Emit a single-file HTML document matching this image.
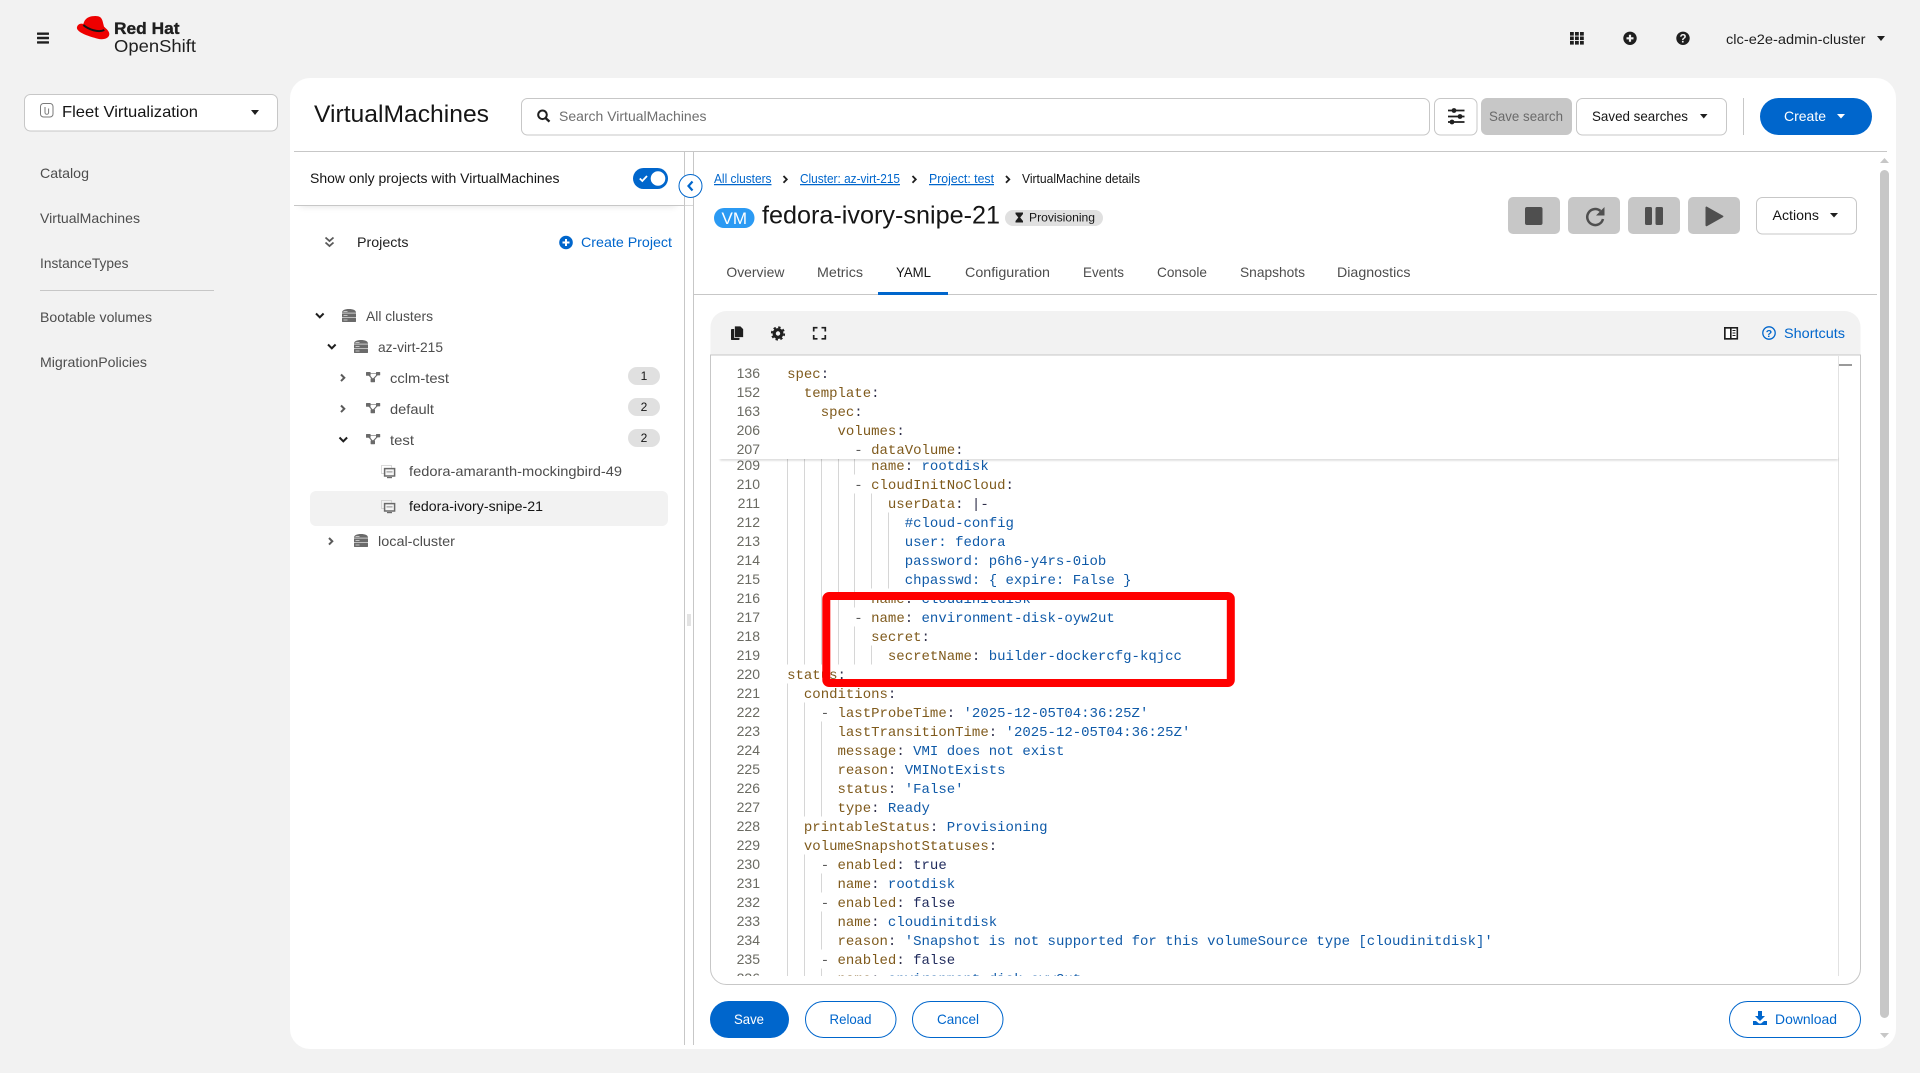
<!DOCTYPE html>
<html lang="en"><head><meta charset="utf-8"><title>VirtualMachines</title>
<style>
html,body{margin:0;padding:0;background:#f2f2f2;overflow:hidden}
svg{display:block}
text{font-family:"Liberation Sans",sans-serif;font-size:14px;white-space:pre}
.n{fill:#4d4d4d}.d{fill:#1f1f1f}.b{fill:#0066cc}.w{fill:#fff}
.m text,text.m{font-family:"Liberation Mono",monospace;font-size:14px}
.k{fill:#7f5a1c}.v{fill:#0f5aa8}.c{fill:#2f2f4a}.f{fill:#1f2a5c}.g{fill:#5a5a5a}
.ln text{fill:#6a6a62;text-anchor:end}
.gd line{stroke:#d6d6d6;stroke-width:1}
</style></head><body>
<svg width="1920" height="1073" viewBox="0 0 1920 1073" xmlns="http://www.w3.org/2000/svg">
<defs>
<filter id="sh" x="-5%" y="-100%" width="110%" height="400%"><feGaussianBlur stdDeviation="4"/></filter>
<clipPath id="cc"><rect x="712" y="459" width="1126" height="517"/></clipPath>
<g id="srv" fill="#6a6a6a"><path d="M0 3.800C0 1 3 0 7 0s7 1 7 3.800z"/><rect x="0" y="4.400" width="14" height="3.900"/><rect x="0" y="8.900" width="14" height="4.100" rx=".6"/><g fill="#d8d8d8"><rect x="1.500" y="2.200" width="4" height=".8"/><rect x="1.500" y="6" width="4" height=".8"/><rect x="1.500" y="10.600" width="4" height=".8"/></g></g>
<g id="prj" fill="#6a6a6a"><rect x="0" y="0" width="4.600" height="3.800" rx=".6"/><rect x="10" y="0" width="4.200" height="3.400" rx=".6"/><rect x="4.600" y="6.400" width="4.400" height="3.800" rx=".6"/><path d="M2.500 2.500L6.800 7.500M6.800 7.500L12 2" stroke="#6a6a6a" stroke-width="1.100" fill="none"/><path d="M4 1.600H10.500" stroke="#6a6a6a" stroke-width=".6"/></g>
<g id="vm"><rect x=".5" y=".5" width="10" height="8" fill="none" stroke="#b5b5b5" stroke-width="1" stroke-dasharray="1 1"/><rect x="3.600" y="3.600" width="10" height="7.400" fill="#f5f5f5" stroke="#6a6a6a" stroke-width="1.500"/><rect x="5.500" y="6.400" width="6" height="1" fill="#8a8a8a"/><path d="M6 12h5v1.200H6z" fill="#6a6a6a"/></g>
</defs>

<rect width="1920" height="1073" fill="#f2f2f2"/>

<!-- masthead -->
<g fill="#1f1f1f"><rect x="37" y="32.500" width="12" height="2.400" rx=".5"/><rect x="37" y="36.800" width="12" height="2.400" rx=".5"/><rect x="37" y="41.200" width="12" height="2.400" rx=".5"/></g>
<g transform="translate(20,8) scale(.33333)">
<path fill="#e00" d="M192 42C198 28 212 24 226 24C238 24 245 28 248 40L252 56C258 62 268 69 268 78C268 91 250 97 232 92C210 86 176 76 171 62C169 52 180 44 190 48Z"/>
<path fill="none" stroke="#151515" stroke-width="6" d="M190 51C205 64 235 75 253 66"/>
</g>
<text x="114" y="34" style="font-size:17px;font-weight:700;stroke:#1f1f1f;stroke-width:.35" fill="#1f1f1f" textLength="65.500" lengthAdjust="spacingAndGlyphs">Red Hat</text>
<text x="114" y="52" style="font-size:17.500px" fill="#1f1f1f" textLength="82" lengthAdjust="spacingAndGlyphs">OpenShift</text>

<g fill="#1f1f1f">
<rect x="1570" y="32" width="3.800" height="3.600"/><rect x="1575" y="32" width="3.800" height="3.600"/><rect x="1580" y="32" width="3.800" height="3.600"/>
<rect x="1570" y="36.500" width="3.800" height="3.600"/><rect x="1575" y="36.500" width="3.800" height="3.600"/><rect x="1580" y="36.500" width="3.800" height="3.600"/>
<rect x="1570" y="41" width="3.800" height="3.600"/><rect x="1575" y="41" width="3.800" height="3.600"/><rect x="1580" y="41" width="3.800" height="3.600"/>
<circle cx="1630" cy="38.300" r="6.700"/><circle cx="1683" cy="38.300" r="6.700"/>
</g>
<path d="M1626.500 38.300h7M1630 34.800v7" stroke="#f2f2f2" stroke-width="2.200"/>
<text x="1683" y="42.500" text-anchor="middle" style="font-size:11.500px;font-weight:700" fill="#f2f2f2">?</text>
<text x="1726" y="44" class="d" textLength="139.500" lengthAdjust="spacingAndGlyphs">clc-e2e-admin-cluster</text>
<path d="M1877 36h8l-4 5z" fill="#1f1f1f"/>

<!-- left nav -->
<rect x="24.500" y="94.500" width="253" height="36.500" rx="6" fill="#fff" stroke="#c7c7c7"/>
<rect x="40.500" y="103.500" width="12.500" height="13.500" rx="3" fill="none" stroke="#7a7a7a"/>
<path d="M45 107v5.500a1.800 1.800 0 0 0 3.600 0V108.500" fill="none" stroke="#7a7a7a" stroke-width="1"/>
<text x="62" y="117" style="font-size:16px" fill="#151515" textLength="136" lengthAdjust="spacingAndGlyphs">Fleet Virtualization</text>
<path d="M251 110h8l-4 5z" fill="#1f1f1f"/>
<text x="40" y="178" class="n" textLength="49" lengthAdjust="spacingAndGlyphs">Catalog</text>
<text x="40" y="223" class="n" textLength="100" lengthAdjust="spacingAndGlyphs">VirtualMachines</text>
<text x="40" y="268" class="n" textLength="88.500" lengthAdjust="spacingAndGlyphs">InstanceTypes</text>
<rect x="40" y="290" width="174" height="1" fill="#c7c7c7"/>
<text x="40" y="322" class="n" textLength="112" lengthAdjust="spacingAndGlyphs">Bootable volumes</text>
<text x="40" y="367" class="n" textLength="107" lengthAdjust="spacingAndGlyphs">MigrationPolicies</text>

<!-- main card -->
<rect x="290" y="78" width="1606" height="971" rx="20" fill="#fff"/>
<text x="314" y="122" style="font-size:24px" fill="#151515" textLength="175" lengthAdjust="spacingAndGlyphs">VirtualMachines</text>

<rect x="521.500" y="98.500" width="908" height="36.500" rx="6" fill="#fff" stroke="#c7c7c7"/>
<circle cx="542.500" cy="114.800" r="4.300" fill="none" stroke="#1f1f1f" stroke-width="2"/><path d="M545.500 118l4 3.600" stroke="#1f1f1f" stroke-width="2.400"/>
<text x="559" y="121" fill="#6f6f6f" textLength="147.500" lengthAdjust="spacingAndGlyphs">Search VirtualMachines</text>

<rect x="1434.500" y="98.500" width="42.500" height="36.500" rx="6" fill="#fff" stroke="#c7c7c7"/>
<path d="M1448 110.500h16.500M1448 116.500h16.500M1448 122h16.500" stroke="#1f1f1f" stroke-width="1.800"/><circle cx="1454" cy="110.500" r="2.400" fill="#1f1f1f"/><circle cx="1460" cy="116.500" r="2.400" fill="#1f1f1f"/><circle cx="1452" cy="122" r="2.400" fill="#1f1f1f"/>
<rect x="1481" y="98" width="91" height="37" rx="6" fill="#c7c7c7"/>
<text x="1489" y="121" fill="#6a6a6a" textLength="74" lengthAdjust="spacingAndGlyphs">Save search</text>
<rect x="1576.500" y="98.500" width="150" height="36.500" rx="6" fill="#fff" stroke="#c7c7c7"/>
<text x="1592" y="121" fill="#151515" textLength="96" lengthAdjust="spacingAndGlyphs">Saved searches</text>
<path d="M1700 114h7.500l-3.750 4.500z" fill="#1f1f1f"/>
<rect x="1743" y="98" width="1" height="37" fill="#c7c7c7"/>
<rect x="1760" y="98" width="112" height="37" rx="18.500" fill="#0066cc"/>
<text x="1784" y="121" class="w" textLength="42" lengthAdjust="spacingAndGlyphs">Create</text>
<path d="M1837 114h8l-4 4.500z" fill="#fff"/>

<rect x="294" y="151" width="1593" height="1" fill="#c7c7c7"/>

<!-- tree panel -->
<rect x="300" y="200" width="376" height="5" fill="#000" opacity=".18" filter="url(#sh)"/>
<rect x="294" y="152" width="390" height="53" fill="#fff"/>
<rect x="294" y="205" width="390" height="1" fill="#c7c7c7"/>
<text x="310" y="183" fill="#151515" textLength="249.500" lengthAdjust="spacingAndGlyphs">Show only projects with VirtualMachines</text>
<rect x="633" y="168" width="35" height="21" rx="10.500" fill="#0066cc"/>
<circle cx="658" cy="178.500" r="7.300" fill="#fff"/>
<path d="M639.800 178.500l2.500 2.500 4.700-5" fill="none" stroke="#fff" stroke-width="1.800"/>

<path d="M325.500 237.500l4 3.500 4-3.500M325.500 242.500l4 3.500 4-3.500" fill="none" stroke="#5a5a5a" stroke-width="1.800"/>
<text x="357" y="247" fill="#1f1f1f" textLength="51.500" lengthAdjust="spacingAndGlyphs">Projects</text>
<circle cx="566" cy="242.500" r="6.800" fill="#0066cc"/><path d="M562.500 242.500h7M566 239v7" stroke="#fff" stroke-width="2"/>
<text x="581" y="247" class="b" textLength="91" lengthAdjust="spacingAndGlyphs">Create Project</text>

<g fill="none" stroke="#1f1f1f" stroke-width="2">
<path d="M316 313.500l3.800 3.800 3.800-3.800"/><path d="M328 344.500l3.800 3.800 3.800-3.800"/>
<path d="M339.500 437.500l3.800 3.800 3.800-3.800"/>
</g>
<g fill="none" stroke="#5a5a5a" stroke-width="2">
<path d="M341 374.500l3.300 3.300-3.300 3.300"/><path d="M341 405.500l3.300 3.300-3.300 3.300"/><path d="M329 538l3.300 3.300-3.300 3.300"/>
</g>
<use href="#srv" x="342" y="309"/><use href="#srv" x="354" y="340"/><use href="#srv" x="354" y="534"/>
<use href="#prj" x="366" y="372"/><use href="#prj" x="366" y="403"/><use href="#prj" x="366" y="434"/>
<use href="#vm" x="381" y="465"/>
<rect x="310" y="491" width="358" height="35" rx="6" fill="#f2f2f2"/>
<use href="#vm" x="381" y="500"/>
<g class="n">
<text x="366" y="321" class="n" textLength="67" lengthAdjust="spacingAndGlyphs">All clusters</text>
<text x="378" y="352" class="n" textLength="65" lengthAdjust="spacingAndGlyphs">az-virt-215</text>
<text x="390" y="383" class="n" textLength="59" lengthAdjust="spacingAndGlyphs">cclm-test</text>
<text x="390" y="414" class="n" textLength="44" lengthAdjust="spacingAndGlyphs">default</text>
<text x="390" y="445" class="n" textLength="24" lengthAdjust="spacingAndGlyphs">test</text>
<text x="409" y="476" class="n" textLength="213" lengthAdjust="spacingAndGlyphs">fedora-amaranth-mockingbird-49</text>
<text x="378" y="546" class="n" textLength="77" lengthAdjust="spacingAndGlyphs">local-cluster</text>
</g>
<text x="409" y="511" fill="#151515" textLength="134" lengthAdjust="spacingAndGlyphs">fedora-ivory-snipe-21</text>
<g fill="#e0e0e0"><rect x="628" y="367" width="32" height="18" rx="9"/><rect x="628" y="398" width="32" height="18" rx="9"/><rect x="628" y="429" width="32" height="18" rx="9"/></g>
<g fill="#151515">
<text x="644" y="380" text-anchor="middle" style="font-size:12px">1</text>
<text x="644" y="411" text-anchor="middle" style="font-size:12px">2</text>
<text x="644" y="442" text-anchor="middle" style="font-size:12px">2</text>
</g>

<!-- splitter -->
<rect x="684" y="152" width="1" height="893" fill="#c7c7c7"/>
<rect x="693" y="152" width="1" height="893" fill="#c7c7c7"/>
<rect x="685" y="205" width="8" height="1" fill="#d8d8d8"/>
<path d="M688 614v12M690 614v12" stroke="#c7c7c7"/>
<circle cx="690.500" cy="186" r="11.500" fill="#fff" stroke="#0066cc" stroke-width="1"/>
<path d="M692.500 181.500l-4 4.500 4 4.500" fill="none" stroke="#0066cc" stroke-width="2.200"/>

<!-- breadcrumb -->
<text x="714" y="183" class="b" style="font-size:12.500px;text-decoration:underline" textLength="57.500" lengthAdjust="spacingAndGlyphs">All clusters</text>
<text x="800" y="183" class="b" style="font-size:12.500px;text-decoration:underline" textLength="100" lengthAdjust="spacingAndGlyphs">Cluster: az-virt-215</text>
<text x="929" y="183" class="b" style="font-size:12.500px;text-decoration:underline" textLength="65" lengthAdjust="spacingAndGlyphs">Project: test</text>
<text x="1022" y="183" style="font-size:12.500px" fill="#151515" textLength="118" lengthAdjust="spacingAndGlyphs">VirtualMachine details</text>
<g fill="none" stroke="#1f1f1f" stroke-width="1.800"><path d="M783.500 176l3.300 3.400-3.300 3.400"/><path d="M912.500 176l3.300 3.400-3.300 3.400"/><path d="M1006 176l3.300 3.400-3.300 3.400"/></g>

<rect x="714" y="208" width="40.500" height="20" rx="10" fill="#2b9af3"/>
<text x="721.500" y="224" class="w" style="font-size:17px" textLength="25.500" lengthAdjust="spacingAndGlyphs">VM</text>
<text x="762" y="223.500" style="font-size:25px" fill="#151515" textLength="238" lengthAdjust="spacingAndGlyphs">fedora-ivory-snipe-21</text>
<rect x="1005" y="210" width="98" height="16" rx="8" fill="#e0e0e0"/>
<path d="M1015.500 212.500h7.500v1.500l-2.800 3.500 2.800 3.500v1.500h-7.500v-1.500l2.800-3.500-2.800-3.500z" fill="#1f1f1f"/>
<text x="1029" y="221.500" style="font-size:12px" fill="#151515" textLength="66" lengthAdjust="spacingAndGlyphs">Provisioning</text>

<g fill="#c7c7c7"><rect x="1508" y="197" width="52" height="37" rx="5"/><rect x="1568" y="197" width="52" height="37" rx="5"/><rect x="1628" y="197" width="52" height="37" rx="5"/><rect x="1688" y="197" width="52" height="37" rx="5"/></g>
<g fill="#4f4f4f"><rect x="1525" y="207" width="17.500" height="18" rx="2"/>
<rect x="1645" y="207" width="7" height="18" rx="1.500"/><rect x="1655.500" y="207" width="7.500" height="18" rx="1.500"/>
<path d="M1705.500 207.500a1 1 0 0 1 1.500-.8l16 9a.8.8 0 0 1 0 1.400l-16 9a1 1 0 0 1-1.500-.8z"/></g>
<path d="M1600.500 211a8 8 0 1 0 2.500 8" fill="none" stroke="#4f4f4f" stroke-width="2.500"/>
<path d="M1604.500 207v8.500h-8.500z" fill="#4f4f4f"/>
<rect x="1756.500" y="197.500" width="100" height="36.500" rx="6" fill="#fff" stroke="#c7c7c7"/>
<text x="1772.500" y="220" fill="#151515" textLength="46.500" lengthAdjust="spacingAndGlyphs">Actions</text>
<path d="M1830 213h8l-4 4.500z" fill="#1f1f1f"/>

<!-- tabs -->
<text x="726.400" y="277" class="n" textLength="58" lengthAdjust="spacingAndGlyphs">Overview</text>
<text x="817" y="277" class="n" textLength="46" lengthAdjust="spacingAndGlyphs">Metrics</text>
<text x="896" y="277" fill="#151515" textLength="35" lengthAdjust="spacingAndGlyphs">YAML</text>
<text x="965" y="277" class="n" textLength="85" lengthAdjust="spacingAndGlyphs">Configuration</text>
<text x="1083" y="277" class="n" textLength="41" lengthAdjust="spacingAndGlyphs">Events</text>
<text x="1157" y="277" class="n" textLength="50" lengthAdjust="spacingAndGlyphs">Console</text>
<text x="1240" y="277" class="n" textLength="65" lengthAdjust="spacingAndGlyphs">Snapshots</text>
<text x="1337" y="277" class="n" textLength="73.500" lengthAdjust="spacingAndGlyphs">Diagnostics</text>
<rect x="694" y="294" width="1183" height="1" fill="#c7c7c7"/>
<rect x="878" y="292" width="70" height="3" fill="#0066cc"/>

<!-- editor -->
<path d="M710.500 327a16 16 0 0 1 16-16H1844a16 16 0 0 1 16.500 16V355H710.500z" fill="#f2f2f2"/>
<path d="M710.500 355V968.500a16 16 0 0 0 16 16H1844a16 16 0 0 0 16.500-16V355z" fill="#fff" stroke="#c7c7c7"/>
<rect x="731" y="329" width="8.500" height="11" rx=".8" fill="#1f1f1f"/><path d="M734.500 326h6l3 3v8.500h-9z" fill="#1f1f1f" stroke="#f2f2f2" stroke-width=".7"/>
<circle cx="778" cy="333.500" r="3.800" fill="none" stroke="#1f1f1f" stroke-width="3.200"/><circle cx="778" cy="333.500" r="6.200" fill="none" stroke="#1f1f1f" stroke-width="1.800" stroke-dasharray="2.400 2.470"/>
<path d="M813.700 331.500v-3.800h3.800M821.500 327.700h3.800v3.800M825.300 335v3.800h-3.800M817.500 338.800h-3.800V335" fill="none" stroke="#1f1f1f" stroke-width="1.700"/>
<rect x="1724.800" y="327.800" width="12.500" height="11" fill="#fff" stroke="#1f1f1f" stroke-width="1.600"/><rect x="1724.800" y="327.800" width="6" height="11" fill="none" stroke="#1f1f1f" stroke-width="1.600"/><path d="M1732.500 330.500h3M1732.500 333h3M1732.500 335.500h3" stroke="#1f1f1f" stroke-width=".9"/>
<circle cx="1769" cy="333" r="6.200" fill="none" stroke="#0066cc" stroke-width="1.300"/>
<text x="1769" y="337" text-anchor="middle" class="b" style="font-size:10.500px;font-weight:700">?</text>
<text x="1784" y="338" class="b" textLength="61" lengthAdjust="spacingAndGlyphs">Shortcuts</text>

<rect x="1838" y="356" width="1" height="620" fill="#e2e2e2"/>

<g clip-path="url(#cc)">
<g class="gd">
<line x1="787.500" y1="459" x2="787.500" y2="664.500"/><line x1="804.500" y1="459" x2="804.500" y2="664.500"/><line x1="821.500" y1="459" x2="821.500" y2="664.500"/><line x1="838.500" y1="459" x2="838.500" y2="664.500"/>
<line x1="854.500" y1="459" x2="854.500" y2="474.500"/><line x1="854.500" y1="493.500" x2="854.500" y2="607.500"/><line x1="854.500" y1="626.500" x2="854.500" y2="664.500"/>
<line x1="871.500" y1="493.500" x2="871.500" y2="588.500"/><line x1="871.500" y1="645.500" x2="871.500" y2="664.500"/>
<line x1="888.500" y1="512.500" x2="888.500" y2="588.500"/>
<line x1="787.500" y1="683.500" x2="787.500" y2="976"/>
<line x1="804.500" y1="702.500" x2="804.500" y2="816.500"/><line x1="804.500" y1="854.500" x2="804.500" y2="976"/>
<line x1="821.500" y1="721.500" x2="821.500" y2="816.500"/><line x1="821.500" y1="873.500" x2="821.500" y2="892.500"/><line x1="821.500" y1="911.500" x2="821.500" y2="949.500"/><line x1="821.500" y1="968.500" x2="821.500" y2="976"/>
</g>
<g class="ln">
<text x="760" y="470">209</text><text x="760" y="489">210</text><text x="760" y="508">211</text><text x="760" y="527">212</text><text x="760" y="546">213</text><text x="760" y="565">214</text><text x="760" y="584">215</text><text x="760" y="603">216</text><text x="760" y="622">217</text><text x="760" y="641">218</text><text x="760" y="660">219</text><text x="760" y="679">220</text><text x="760" y="698">221</text><text x="760" y="717">222</text><text x="760" y="736">223</text><text x="760" y="755">224</text><text x="760" y="774">225</text><text x="760" y="793">226</text><text x="760" y="812">227</text><text x="760" y="831">228</text><text x="760" y="850">229</text><text x="760" y="869">230</text><text x="760" y="888">231</text><text x="760" y="907">232</text><text x="760" y="926">233</text><text x="760" y="945">234</text><text x="760" y="964">235</text><text x="760" y="983">236</text>
</g>
<g class="m">
<text x="871.100" y="470"><tspan class="k">name</tspan><tspan class="c">: </tspan><tspan class="v">rootdisk</tspan></text>
<text x="854.300" y="489"><tspan class="g">- </tspan><tspan class="k">cloudInitNoCloud</tspan><tspan class="c">:</tspan></text>
<text x="887.900" y="508"><tspan class="k">userData</tspan><tspan class="c">: |-</tspan></text>
<text x="904.700" y="527" class="v">#cloud-config</text>
<text x="904.700" y="546" class="v">user: fedora</text>
<text x="904.700" y="565" class="v">password: p6h6-y4rs-0iob</text>
<text x="904.700" y="584" class="v">chpasswd: { expire: False }</text>
<text x="871.100" y="603"><tspan class="k">name</tspan><tspan class="c">: </tspan><tspan class="v">cloudinitdisk</tspan></text>
<text x="854.300" y="622"><tspan class="g">- </tspan><tspan class="k">name</tspan><tspan class="c">: </tspan><tspan class="v">environment-disk-oyw2ut</tspan></text>
<text x="871.100" y="641"><tspan class="k">secret</tspan><tspan class="c">:</tspan></text>
<text x="887.900" y="660"><tspan class="k">secretName</tspan><tspan class="c">: </tspan><tspan class="v">builder-dockercfg-kqjcc</tspan></text>
<text x="787.100" y="679"><tspan class="k">status</tspan><tspan class="c">:</tspan></text>
<text x="803.900" y="698"><tspan class="k">conditions</tspan><tspan class="c">:</tspan></text>
<text x="820.700" y="717"><tspan class="g">- </tspan><tspan class="k">lastProbeTime</tspan><tspan class="c">: </tspan><tspan class="v">'2025-12-05T04:36:25Z'</tspan></text>
<text x="837.500" y="736"><tspan class="k">lastTransitionTime</tspan><tspan class="c">: </tspan><tspan class="v">'2025-12-05T04:36:25Z'</tspan></text>
<text x="837.500" y="755"><tspan class="k">message</tspan><tspan class="c">: </tspan><tspan class="v">VMI does not exist</tspan></text>
<text x="837.500" y="774"><tspan class="k">reason</tspan><tspan class="c">: </tspan><tspan class="v">VMINotExists</tspan></text>
<text x="837.500" y="793"><tspan class="k">status</tspan><tspan class="c">: </tspan><tspan class="v">'False'</tspan></text>
<text x="837.500" y="812"><tspan class="k">type</tspan><tspan class="c">: </tspan><tspan class="v">Ready</tspan></text>
<text x="803.900" y="831"><tspan class="k">printableStatus</tspan><tspan class="c">: </tspan><tspan class="v">Provisioning</tspan></text>
<text x="803.900" y="850"><tspan class="k">volumeSnapshotStatuses</tspan><tspan class="c">:</tspan></text>
<text x="820.700" y="869"><tspan class="g">- </tspan><tspan class="k">enabled</tspan><tspan class="c">: </tspan><tspan class="f">true</tspan></text>
<text x="837.500" y="888"><tspan class="k">name</tspan><tspan class="c">: </tspan><tspan class="v">rootdisk</tspan></text>
<text x="820.700" y="907"><tspan class="g">- </tspan><tspan class="k">enabled</tspan><tspan class="c">: </tspan><tspan class="f">false</tspan></text>
<text x="837.500" y="926"><tspan class="k">name</tspan><tspan class="c">: </tspan><tspan class="v">cloudinitdisk</tspan></text>
<text x="837.500" y="945"><tspan class="k">reason</tspan><tspan class="c">: </tspan><tspan class="v">'Snapshot is not supported for this volumeSource type [cloudinitdisk]'</tspan></text>
<text x="820.700" y="964"><tspan class="g">- </tspan><tspan class="k">enabled</tspan><tspan class="c">: </tspan><tspan class="f">false</tspan></text>
<text x="837.500" y="983"><tspan class="k">name</tspan><tspan class="c">: </tspan><tspan class="v">environment-disk-oyw2ut</tspan></text>
</g>
</g>

<!-- sticky -->
<rect x="720" y="458" width="1118" height="2.500" fill="#000" opacity=".16" style="filter:blur(1px)"/>
<rect x="712" y="356" width="1126" height="103" fill="#fff"/>
<g class="ln"><text x="760" y="378">136</text><text x="760" y="397">152</text><text x="760" y="416">163</text><text x="760" y="435">206</text><text x="760" y="454">207</text></g>
<g class="m">
<text x="787.100" y="378"><tspan class="k">spec</tspan><tspan class="c">:</tspan></text>
<text x="803.900" y="397"><tspan class="k">template</tspan><tspan class="c">:</tspan></text>
<text x="820.700" y="416"><tspan class="k">spec</tspan><tspan class="c">:</tspan></text>
<text x="837.500" y="435"><tspan class="k">volumes</tspan><tspan class="c">:</tspan></text>
<text x="854.300" y="454"><tspan class="g">- </tspan><tspan class="k">dataVolume</tspan><tspan class="c">:</tspan></text>
</g>
<rect x="1839" y="364" width="13" height="2" fill="#9a9a9a"/>

<!-- red annotation -->
<rect x="826.300" y="596" width="404.500" height="87" rx="3" fill="none" stroke="#ff0000" stroke-width="8"/>

<!-- footer buttons -->
<rect x="710" y="1001" width="79" height="37" rx="18.500" fill="#0066cc"/>
<text x="734" y="1024" class="w" textLength="30" lengthAdjust="spacingAndGlyphs">Save</text>
<rect x="805.500" y="1001.500" width="90.500" height="36" rx="18" fill="#fff" stroke="#0066cc"/>
<text x="829.500" y="1024" class="b" textLength="42" lengthAdjust="spacingAndGlyphs">Reload</text>
<rect x="912.500" y="1001.500" width="90.500" height="36" rx="18" fill="#fff" stroke="#0066cc"/>
<text x="937" y="1024" class="b" textLength="42" lengthAdjust="spacingAndGlyphs">Cancel</text>
<rect x="1729.500" y="1001.500" width="131" height="36" rx="18" fill="#fff" stroke="#0066cc"/>
<path d="M1758 1011h4v5h3l-5 5-5-5h3zM1753 1021h3l3 2.500h2l3-2.500h3v4h-14z" fill="#0066cc"/>
<text x="1775" y="1024" class="b" textLength="62" lengthAdjust="spacingAndGlyphs">Download</text>

<!-- scrollbar -->
<path d="M1880 163l4.500-5 4.500 5z" fill="#c7c7c7"/>
<rect x="1880" y="170" width="9" height="848" rx="4.500" fill="#c7c7c7"/>
<path d="M1880 1033l4.500 5 4.500-5z" fill="#c7c7c7"/>
</svg>
</body></html>
